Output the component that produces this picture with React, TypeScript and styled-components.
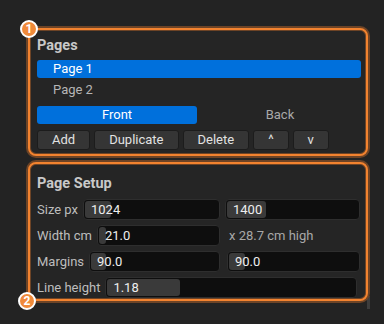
import React from "react";
import styled, { createGlobalStyle } from "styled-components";

const Global = createGlobalStyle`
  html, body {
    margin: 0;
    padding: 0;
    background: #232323;
    font-family: Roboto, "Liberation Sans", sans-serif;
    font-size: 13px;
  }
`

const Page = styled.div`
  position: relative;
  width: 384px;
  height: 324px;
  padding: 28px 0 0 28px;
  box-sizing: border-box;
  display: flex;
  flex-direction: column;
  gap: 6px;

  &::after {
    content: "";
    position: absolute;
    left: 367px;
    top: 296px;
    width: 3px;
    height: 13px;
    background: #3d3d3d;
  }
`

const Frame = styled.section<{ $h: number }>`
  position: relative;
  width: 340px;
  height: ${p => p.$h}px;
  box-sizing: border-box;
  border: 2px solid #f3832f;
  border-radius: 8px;
  background: #252525;
  box-shadow: 0 0 0 2px #6e4426, inset 0 0 0 1px #6e4426;
  display: flex;
  flex-direction: column;
  z-index: 1;
`

const Badge = styled.div<{ $bottom?: boolean }>`
  position: absolute;
  z-index: 2;
  ${p => p.$bottom ? "bottom: -11px; left: -12px;" : "top: -10px; left: -10px;"}
  width: 14px;
  height: 14px;
  border-radius: 50%;
  border: 2px solid #ffffff;
  background: #f08a3a;
  color: #fff;
  font-weight: 700;
  font-size: 12px;
  line-height: 14px;
  text-align: center;
`

const Inner = styled.div<{ $top: number; $bottom: number }>`
  display: flex;
  flex-direction: column;
  padding: ${p => p.$top}px 5px ${p => p.$bottom}px 7px;
`

const Title = styled.div`
  height: 20px;
  line-height: 20px;
  font-size: 14.5px;
  font-weight: 700;
  color: #c9c9c9;
`

const ListItem = styled.div<{ $active?: boolean }>`
  height: 18px;
  line-height: 18px;
  padding-left: 16px;
  border-radius: 3px;
  background: ${p => p.$active ? "#0070dc" : "transparent"};
  color: ${p => p.$active ? "#ffffff" : "#b6b6b6"};
`

const Tabs = styled.div`
  display: grid;
  grid-template-columns: 160px 1fr;
  gap: 2px;
  margin-top: 7px;
`

const Tab = styled.div<{ $active?: boolean }>`
  height: 18px;
  line-height: 18px;
  text-align: center;
  border-radius: 3px;
  background: ${p => p.$active ? "#0070dc" : "transparent"};
  color: ${p => p.$active ? "#ffffff" : "#a9a9a9"};
`

const Toolbar = styled.div`
  display: flex;
  gap: 4px;
  margin-top: 6px;
`

const Button = styled.div`
  height: 20px;
  box-sizing: border-box;
  line-height: 18px;
  padding: 0 14px;
  border: 1px solid #1c1c1c;
  border-radius: 3px;
  background: #353535;
  color: #e2e2e2;
`

const Row = styled.div<{ $full?: boolean }>`
  display: grid;
  grid-template-columns: ${p => p.$full ? "1fr" : "183px 135px"};
  gap: 5px;
  height: 21px;
  margin-top: 5px;
  margin-right: ${p => p.$full ? "4px" : "0"};
  &:first-of-type { margin-top: 4px; }
`

const Cell = styled.div`
  display: flex;
  align-items: center;
  gap: 5px;
  min-width: 0;
`

const Label = styled.span`
  color: #bdbdbd;
  white-space: nowrap;
`

const Note = styled.span`
  color: #a8a8a8;
  padding-left: 4px;
  white-space: nowrap;
`

const Field = styled.div`
  position: relative;
  flex: 1;
  height: 21px;
  box-sizing: border-box;
  border: 1px solid #2e2e2e;
  border-radius: 4px;
  background: #0e0e0e;
  overflow: hidden;
`

const Grab = styled.div`
  position: absolute;
  left: 1px;
  top: 1px;
  bottom: 1px;
  border-radius: 3px;
  background: #3a3a3a;
`

const Value = styled.span`
  position: relative;
  display: block;
  padding-left: 7px;
  line-height: 19px;
  color: #eeeeee;
`

const Slider = ({ value, grab }: { value: string; grab: number }) => (
  <Field>
    <Grab style={{ width: grab }} />
    <Value>{value}</Value>
  </Field>
)

export default function App() {
  return <>
    <Global />
    <Page>
      <Frame $h={128}>
        <Badge>1</Badge>
        <Inner $top={6} $bottom={4}>
          <Title>Pages</Title>
          <ListItem $active style={{ marginTop: 4 }}>Page 1</ListItem>
          <ListItem style={{ marginTop: 3 }}>Page 2</ListItem>
          <Tabs>
            <Tab $active>Front</Tab>
            <Tab>Back</Tab>
          </Tabs>
          <Toolbar>
            <Button>Add</Button>
            <Button>Duplicate</Button>
            <Button>Delete</Button>
            <Button>^</Button>
            <Button>v</Button>
          </Toolbar>
        </Inner>
      </Frame>

      <Frame $h={139}>
        <Badge $bottom>2</Badge>
        <Inner $top={10} $bottom={2}>
          <Title>Page Setup</Title>
          <Row>
            <Cell><Label>Size px</Label><Slider value="1024" grab={26} /></Cell>
            <Cell><Slider value="1400" grab={39} /></Cell>
          </Row>
          <Row>
            <Cell><Label>Width cm</Label><Slider value="21.0" grab={7} /></Cell>
            <Cell><Note>x 28.7 cm high</Note></Cell>
          </Row>
          <Row>
            <Cell><Label>Margins</Label><Slider value="90.0" grab={15} /></Cell>
            <Cell style={{ paddingLeft: 2 }}><Slider value="90.0" grab={16} /></Cell>
          </Row>
          <Row $full>
            <Cell><Label>Line height</Label><Slider value="1.18" grab={73} /></Cell>
          </Row>
        </Inner>
      </Frame>
    </Page>
  </>
}
